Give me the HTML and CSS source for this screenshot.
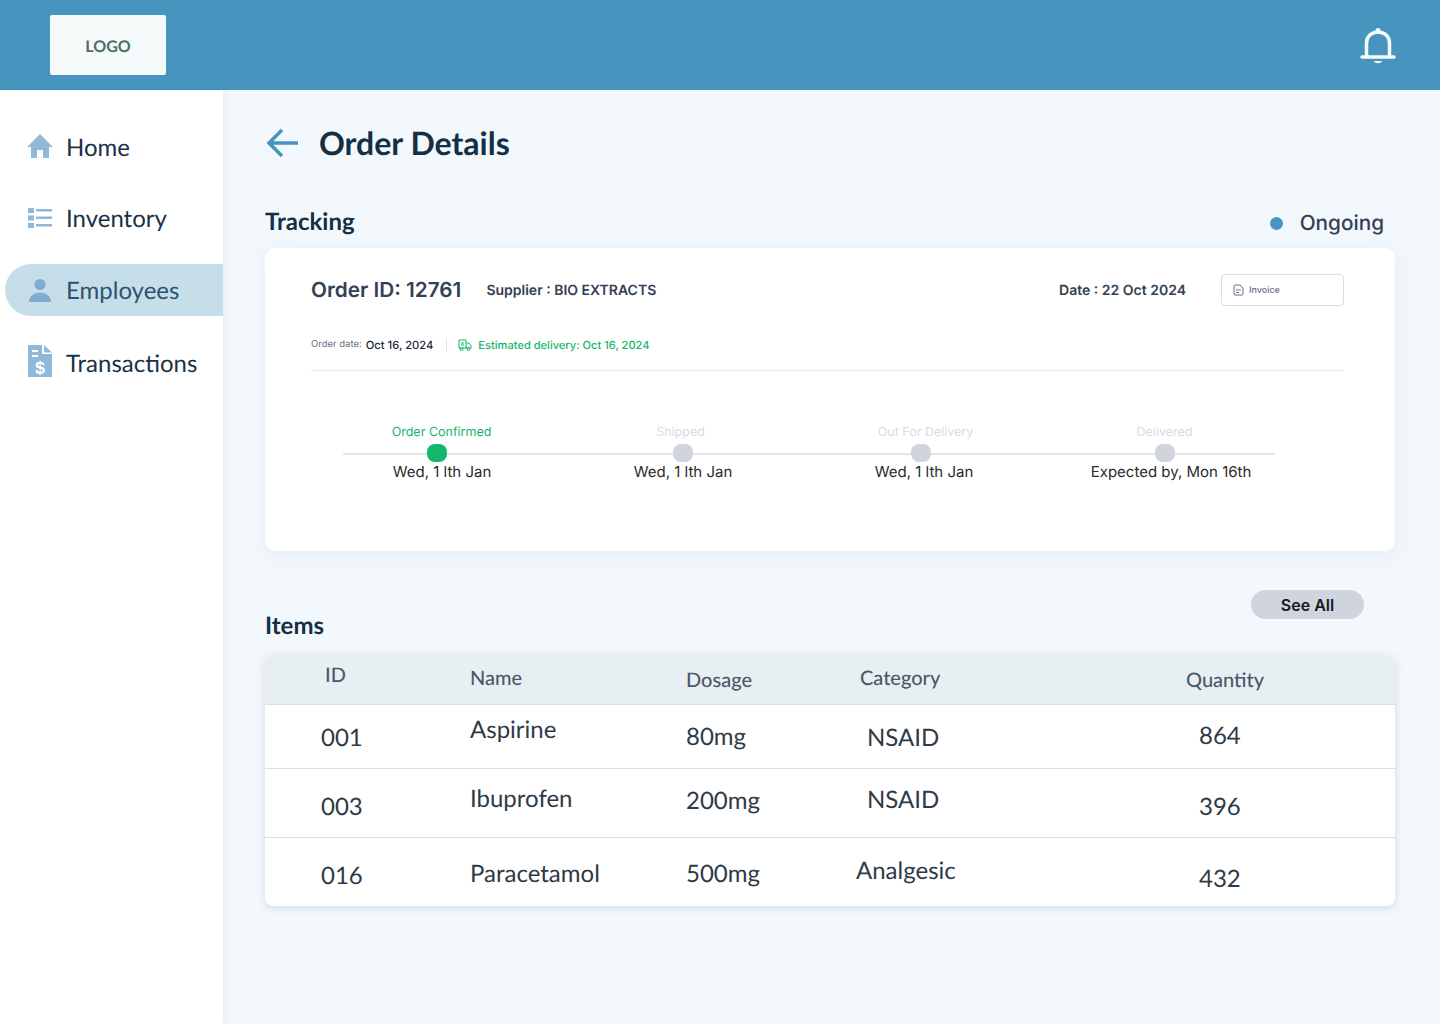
FILE: index.html
```html
<!DOCTYPE html>
<html lang="en">
<head>
  <meta charset="UTF-8" />
  <meta name="viewport" content="width=device-width, initial-scale=1.0"/>
  <title>Order Details</title>
  <link rel="stylesheet" href="styles.css">
</head>
<body>
  <header class="topbar">
    <div class="logo">LOGO</div>
    <svg class="bell" width="36" height="40" viewBox="0 0 36 40" fill="none" stroke="#f5fafb" stroke-width="3.500">
      <path d="M6.500 32V18C6.500 11.500 11.500 7 18 7S29.500 11.500 29.500 18V32"/>
      <path d="M2 32H34" stroke-linecap="round"/>
      <circle cx="18" cy="5.500" r="2.500" fill="#f5fafb" stroke="none"/>
      <path d="M14 36H22C21 39 15 39 14 36Z" fill="#f5fafb" stroke="none"/>
    </svg>
  </header>

  <div class="layout">
    <nav class="sidebar">
      <a class="nav-item">
        <svg class="icon-home" width="28" height="26" viewBox="0 0 28 26" fill="#8fb8d9"><path d="M14 1L27 14H23V25H17V17H11V25H5V14H1Z"/></svg>
        <span>Home</span>
      </a>
      <a class="nav-item">
        <svg width="26" height="22" viewBox="0 0 26 22" fill="#8fb8d9">
          <rect x="1" y="1" width="6" height="5"/><rect x="1" y="8.500" width="6" height="5"/><rect x="1" y="16" width="6" height="5"/>
          <rect x="9" y="2" width="16" height="2.500"/><rect x="9" y="9.500" width="16" height="2.500"/><rect x="9" y="17" width="16" height="2.500"/>
        </svg>
        <span>Inventory</span>
      </a>
      <a class="nav-item active">
        <svg width="26" height="26" viewBox="0 0 26 26" fill="#7fadcf"><circle cx="13" cy="7.500" r="5.500"/><path d="M2 25C2 19 7 15.500 13 15.500S24 19 24 25Z"/></svg>
        <span>Employees</span>
      </a>
      <a class="nav-item">
        <svg class="icon-doc" width="26" height="34" viewBox="0 0 26 34" fill="#8fb8d9">
          <path d="M2 1H15V10H25V32C25 32.600 24.600 33 24 33H2C1.400 33 1 32.600 1 32V2C1 1.400 1.400 1 2 1Z"/>
          <path d="M17 1L25 8.500H17Z"/>
          <rect x="5" y="6" width="6" height="2" fill="#fff"/><rect x="5" y="11" width="6" height="2" fill="#fff"/>
          <text x="13" y="30" text-anchor="middle" class="dollar">$</text>
        </svg>
        <span>Transactions</span>
      </a>
    </nav>

    <main class="content">
      <div class="page-title">
        <svg width="34" height="30" viewBox="0 0 34 30" fill="none" stroke="#4795be" stroke-width="3.500"><path d="M32 16H3M16 3L3 16L16 29"/></svg>
        <h1>Order Details</h1>
      </div>

      <div class="section-head tracking-head">
        <h2>Tracking</h2>
        <div class="status"><span class="status-dot"></span>Ongoing</div>
      </div>

      <section class="card">
        <div class="card-top">
          <span class="order-id">Order ID: 12761</span>
          <span class="supplier">Supplier : BIO EXTRACTS</span>
          <span class="date">Date : 22 Oct 2024</span>
          <div class="invoice">
            <svg width="11" height="12" viewBox="0 0 11 12" fill="none" stroke="#667085" stroke-width="1"><path d="M2 1H7L10 4V10C10 10.600 9.600 11 9 11H2C1.400 11 1 10.600 1 10V2C1 1.400 1.400 1 2 1ZM3 6H8M3 8.500H6"/></svg>
            Invoice
          </div>
        </div>
        <div class="order-meta">
          <span class="meta-label">Order date:</span>
          <span class="meta-value">Oct 16, 2024</span>
          <span class="meta-sep"></span>
          <svg width="14" height="14" viewBox="0 0 14 14" fill="none" stroke="#12b76a" stroke-width="1"><path d="M1 2H8V10H1ZM8 5H11L13 7.500V10H8M3 5H6M3 7H6"/><circle cx="3.500" cy="11" r="1.500"/><circle cx="10.500" cy="11" r="1.500"/></svg>
          <span class="meta-delivery">Estimated delivery: Oct 16, 2024</span>
        </div>

        <div class="tracker">
          <div class="step done">
            <span class="step-label">Order Confirmed</span>
            <span class="step-dot dot-a"></span>
            <span class="step-date">Wed, 1 lth Jan</span>
          </div>
          <div class="step">
            <span class="step-label label-b">Shipped</span>
            <span class="step-dot"></span>
            <span class="step-date">Wed, 1 lth Jan</span>
          </div>
          <div class="step">
            <span class="step-label label-c">Out For Delivery</span>
            <span class="step-dot dot-c"></span>
            <span class="step-date">Wed, 1 lth Jan</span>
          </div>
          <div class="step">
            <span class="step-label">Delivered</span>
            <span class="step-dot"></span>
            <span class="step-date date-d">Expected by, Mon 16th</span>
          </div>
        </div>
      </section>

      <div class="section-head items-head">
        <h2>Items</h2>
        <button class="see-all">See All</button>
      </div>

      <section class="table">
        <div class="row head">
          <span class="id-head up">ID</span><span>Name</span><span class="down">Dosage</span><span>Category</span><span class="down">Quantity</span>
        </div>
        <div class="row row-a">
          <span class="down-more id">001</span><span class="up-more">Aspirine</span><span class="down-more">80mg</span><span class="cat down-more">NSAID</span><span class="qty down">864</span>
        </div>
        <div class="row row-b">
          <span class="down-more id">003</span><span class="up-more">Ibuprofen</span><span class="up-less">200mg</span><span class="cat up-more">NSAID</span><span class="qty down-more">396</span>
        </div>
        <div class="row row-c">
          <span class="id">016</span><span>Paracetamol</span><span>500mg</span><span class="cat-wide up-more">Analgesic</span><span class="qty down-more">432</span>
        </div>
      </section>
    </main>
  </div>
</body>
</html>
```

FILE: styles.css
```css
* {
  box-sizing: border-box;
}

body {
  margin: 0;
  height: 1024px;
  overflow: hidden;
  font-family: "Inter", sans-serif;
  background-color: #f3f8fc;
  color: #344054;
  text-rendering: geometricPrecision;
}

.topbar {
  height: 90px;
  padding: 0 44px 0 50px;
  display: flex;
  align-items: center;
  justify-content: space-between;
  background-color: #4795be;
}

.logo {
  width: 116px;
  height: 60px;
  padding-top: 2px;
  border-radius: 2px;
  display: flex;
  align-items: center;
  justify-content: center;
  background-color: #f4faf9;
  font-family: "Lato", sans-serif;
  font-size: 16px;
  font-weight: 700;
  color: #4b6f64;
}

.bell {
  display: block;
}

.layout {
  display: flex;
  height: 934px;
}

.sidebar {
  width: 223px;
  flex-shrink: 0;
  padding: 30px 0 0 5px;
  background-color: #fff;
  box-shadow: 2px 0 6px rgba(16, 60, 100, 0.05);
  font-family: "Lato", sans-serif;
}

.nav-item {
  height: 52px;
  margin-bottom: 20px;
  padding-left: 21px;
  display: flex;
  align-items: center;
  gap: 12px;
  font-size: 24px;
  color: #1a3148;
}

.nav-item:first-child {
  margin-top: 1px;
  margin-bottom: 19px;
}

.nav-item.active {
  margin-bottom: 21px;
  border-radius: 26px 0 0 26px;
  background-color: #c6deea;
  color: #2c5470;
}

.nav-item svg {
  width: 28px;
  flex-shrink: 0;
}

.nav-item .icon-home {
  margin-top: -3px;
}

.nav-item .icon-doc {
  margin-top: -4px;
}

.dollar {
  font-family: "Liberation Sans", sans-serif;
  font-size: 18px;
  font-weight: 700;
  fill: #fff;
}

.content {
  flex: 1;
  padding: 29px 45px 0 42px;
}

.page-title {
  height: 46px;
  padding-left: 1px;
  display: flex;
  align-items: center;
  gap: 19px;
}

.page-title svg {
  flex-shrink: 0;
}

h1 {
  margin: 0;
  font-family: "Lato", sans-serif;
  font-size: 32px;
  font-weight: 700;
  color: #152f45;
}

h2 {
  margin: 0;
  font-family: "Lato", sans-serif;
  font-size: 24px;
  font-weight: 700;
  color: #152f45;
}

.section-head {
  display: flex;
  justify-content: space-between;
}

.tracking-head {
  height: 34px;
  margin-top: 39px;
  padding-right: 11px;
  align-items: center;
}

.status {
  margin-top: 4px;
  display: flex;
  align-items: center;
  gap: 17px;
  font-size: 20.750px;
  font-weight: 500;
}

.status-dot {
  width: 13px;
  height: 13px;
  border-radius: 50%;
  background-color: #4795be;
}

.card {
  height: 303px;
  margin-top: 10px;
  padding: 26px 51px 0 46px;
  border-radius: 10px;
  background-color: #fff;
  box-shadow: 0 4px 20px rgba(60, 90, 130, 0.08);
}

.card-top {
  height: 32px;
  display: flex;
  align-items: center;
}

.order-id {
  font-size: 20.750px;
  font-weight: 600;
}

.supplier {
  margin-left: 25px;
  font-size: 14px;
  font-weight: 600;
}

.date {
  margin-left: auto;
  font-size: 14px;
  font-weight: 600;
}

.invoice {
  width: 123px;
  height: 32px;
  margin-left: 35px;
  padding-left: 11px;
  display: flex;
  align-items: center;
  gap: 5px;
  border: 1px solid #d9dde6;
  border-radius: 4px;
  font-size: 9px;
  font-weight: 500;
  color: #667085;
}

.order-meta {
  margin-top: 29px;
  padding-bottom: 15px;
  height: 36px;
  display: flex;
  align-items: center;
  border-bottom: 1px solid #e8eaf0;
}

.meta-label {
  margin-top: -2px;
  font-size: 9.500px;
  color: #667085;
}

.meta-value {
  margin-left: 4px;
  font-size: 11.200px;
  font-weight: 500;
  color: #1d2939;
}

.meta-sep {
  width: 1px;
  height: 14px;
  margin: 0 11px 0 13px;
  background-color: #e4e7ec;
}

.meta-delivery {
  margin-left: 6px;
  font-size: 11.100px;
  font-weight: 500;
  color: #12b76a;
}

.tracker {
  position: relative;
  margin-top: 52px;
  margin-left: 10px;
  display: flex;
}

.tracker::before {
  content: "";
  position: absolute;
  left: 22px;
  top: 30px;
  width: 932px;
  height: 2px;
  background-color: #e4e4f0;
}

.step {
  position: relative;
  width: 241px;
  display: flex;
  flex-direction: column;
  align-items: center;
  font-size: 15px;
  color: #2b2b2b;
}

.step-label {
  height: 20px;
  font-size: 12.500px;
  line-height: 20px;
  color: #d8dbe6;
}

.done .step-label {
  color: #12b76a;
}

.label-b {
  margin-right: 4px;
}

.label-c {
  margin-left: 4px;
}

.step-dot {
  width: 20px;
  height: 18px;
  margin-top: 1px;
  border-radius: 8px;
  background-color: #d0d5dd;
}

.done .step-dot {
  background-color: #12b76a;
}

.dot-a {
  margin-left: -10px;
}

.dot-c {
  margin-left: -5px;
}

.step-date {
  padding-left: 1px;
  line-height: 20px;
  white-space: nowrap;
}

.date-d {
  margin-left: 12px;
}

.items-head {
  height: 50px;
  margin-top: 39px;
  padding-right: 31px;
}

.items-head h2 {
  align-self: flex-end;
  line-height: 28px;
}

.see-all {
  width: 113px;
  height: 29px;
  border: 0;
  border-radius: 15px;
  background-color: #d0d5dd;
  font-family: "Inter", sans-serif;
  font-size: 16px;
  font-weight: 600;
  color: #141a22;
}

.table {
  margin-top: 15px;
  border-radius: 8px;
  overflow: hidden;
  background-color: #fff;
  box-shadow: 0 2px 8px rgba(60, 90, 130, 0.18);
  font-family: "Lato", sans-serif;
}

.row {
  display: grid;
  grid-template-columns: 150px 216px 174px 326px 1fr;
  align-items: center;
  padding-left: 55px;
  font-size: 24px;
  color: #2e3a46;
  border-bottom: 1px solid #d9dde2;
}

.row:last-child {
  border-bottom: 0;
}

.row.head {
  height: 50px;
  padding-bottom: 3px;
  font-size: 20px;
  font-weight: 500;
  color: #48596b;
  background-color: #e8eff3;
  border-bottom: 1px solid #d9dde2;
}

.row-a {
  height: 64px;
  padding-bottom: 6px;
}

.row-a .cat {
  margin-top: 8px;
}

.row-b {
  height: 69px;
  padding-bottom: 1px;
}

.row-b .cat {
  margin-bottom: 6px;
}

.row-b .qty {
  margin-top: 8px;
}

.row-c {
  height: 68px;
  padding-top: 3px;
}

.row-c .id {
  padding-top: 4px;
}

.row-c .qty {
  margin-top: 10px;
}

.row-c .cat-wide {
  margin-bottom: 6px;
}

.id-head {
  padding-left: 5px;
}

.id {
  padding-top: 2px;
  padding-left: 1px;
}

.cat {
  padding-left: 7px;
}

.cat-wide {
  margin-left: -4px;
}

.qty {
  padding-left: 13px;
}

.up {
  margin-bottom: 6px;
}

.down {
  margin-top: 4px;
}

.up-less {
  margin-bottom: 4px;
}

.up-more {
  margin-bottom: 8px;
}

.down-more {
  margin-top: 6px;
}
```
